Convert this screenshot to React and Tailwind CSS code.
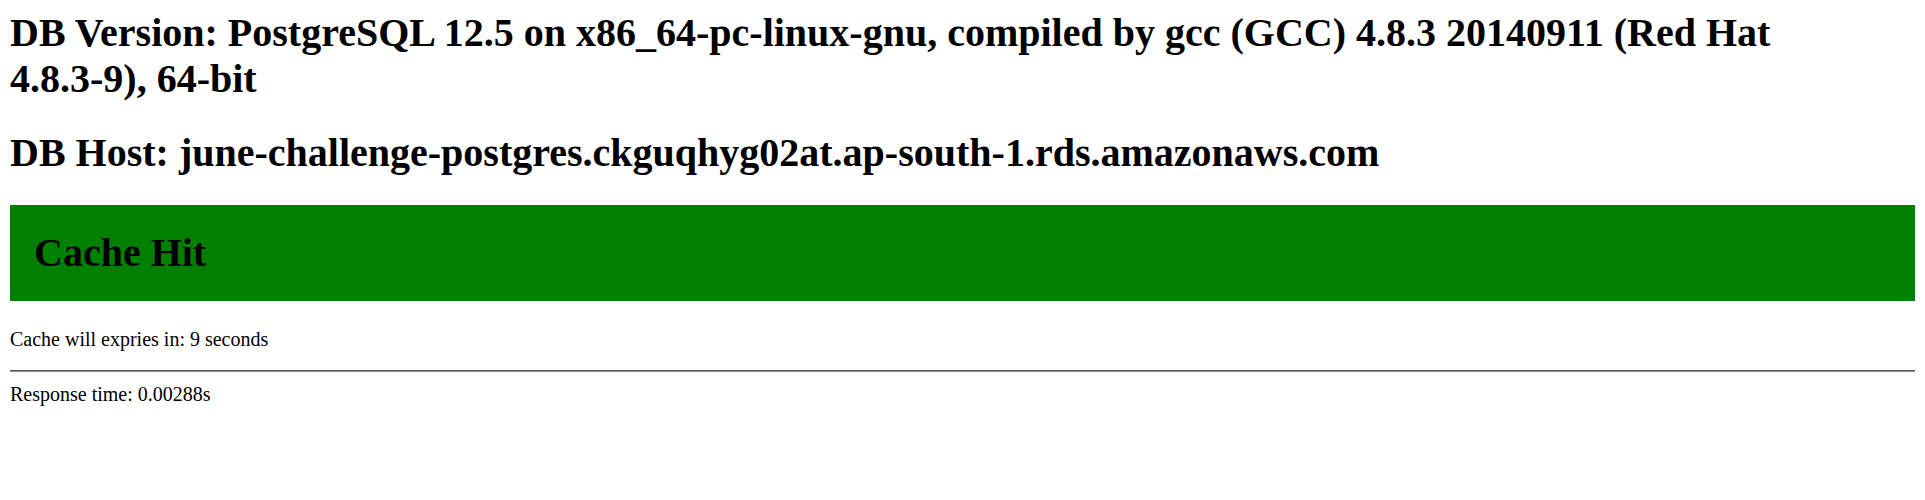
export default function App() {
  return (
    <div className="min-h-[500px] bg-white p-[10px] font-['Liberation_Serif',serif] text-black">
      <h1 className="text-[40px] font-bold leading-[46px]">
        DB Version: PostgreSQL 12.5 on x86_64-pc-linux-gnu, compiled by gcc (GCC) 4.8.3 20140911 (Red Hat{" "}
        <span className="whitespace-nowrap">4.8.3-9),</span> 64-bit
      </h1>
      <h1 className="mt-[28px] text-[40px] font-bold leading-[46px]">
        DB Host: june-challenge-postgres.ckguqhyg02at.ap-south-1.rds.amazonaws.com
      </h1>
      <div className="mt-[29px] bg-[#008000] py-[25px] pl-[24px]">
        <h1 className="text-[40px] font-bold leading-[46px]">Cache Hit</h1>
      </div>
      <p className="mt-[27px] text-[20px] leading-[23px]">Cache will expries in: 9 seconds</p>
      <hr className="mt-[19px] border-t border-b border-t-[#5a5a5a] border-b-[#8c8c8c]" />
      <p className="mt-[11px] text-[20px] leading-[23px]">Response time: 0.00288s</p>
    </div>
  );
}
